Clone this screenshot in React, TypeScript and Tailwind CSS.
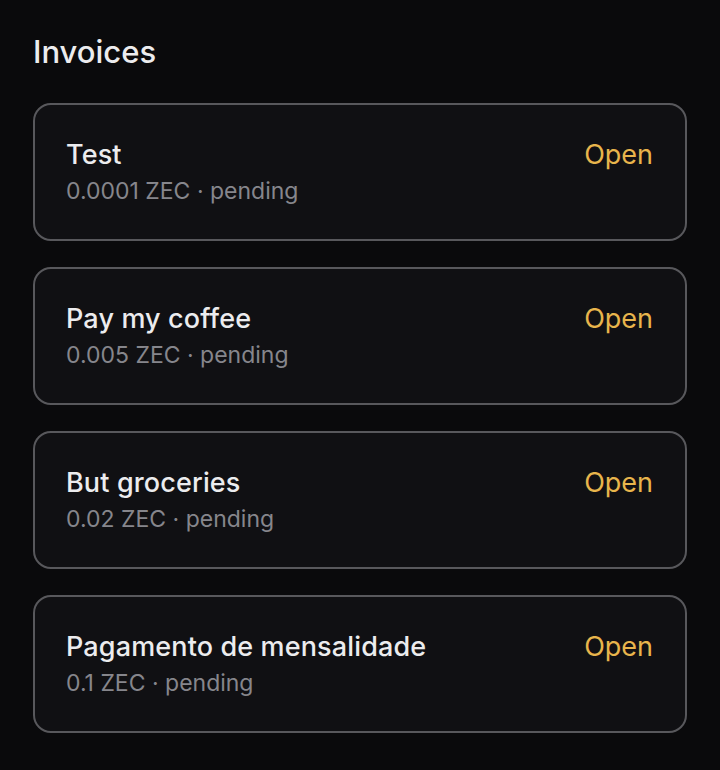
export default function App() {
  const items = [
    { title: "Test", amount: "0.0001 ZEC" },
    { title: "Pay my coffee", amount: "0.005 ZEC" },
    { title: "But groceries", amount: "0.02 ZEC" },
    { title: "Pagamento de mensalidade", amount: "0.1 ZEC" },
  ];
  return (
    <div
      className="min-h-[770px] w-full bg-[#0a0a0c] px-[33px] pt-[32px]"
      style={{ fontFamily: "Inter, 'Noto Sans', sans-serif" }}
    >
      <h1 className="h-[40px] text-[31px] leading-[40px] font-medium text-[#ececee]">Invoices</h1>
      <div className="mt-[31px] flex flex-col gap-[26px]">
        {items.map((it) => (
          <div
            key={it.title}
            className="flex h-[138px] items-start justify-between rounded-[18px] border-2 border-[#58585c] bg-[#101013] pl-[31px] pr-[32px] pt-[34px]"
          >
            <div className="flex flex-col">
              <div className="text-[27px] leading-[32px] font-medium tracking-[0.005em] text-[#ececee]">{it.title}</div>
              <div className="mt-[6px] text-[23px] leading-[28px] text-[#86868c]">
                {it.amount} · pending
              </div>
            </div>
            <div className="text-[27px] leading-[32px] text-[#e8b54c]">Open</div>
          </div>
        ))}
      </div>
    </div>
  );
}
